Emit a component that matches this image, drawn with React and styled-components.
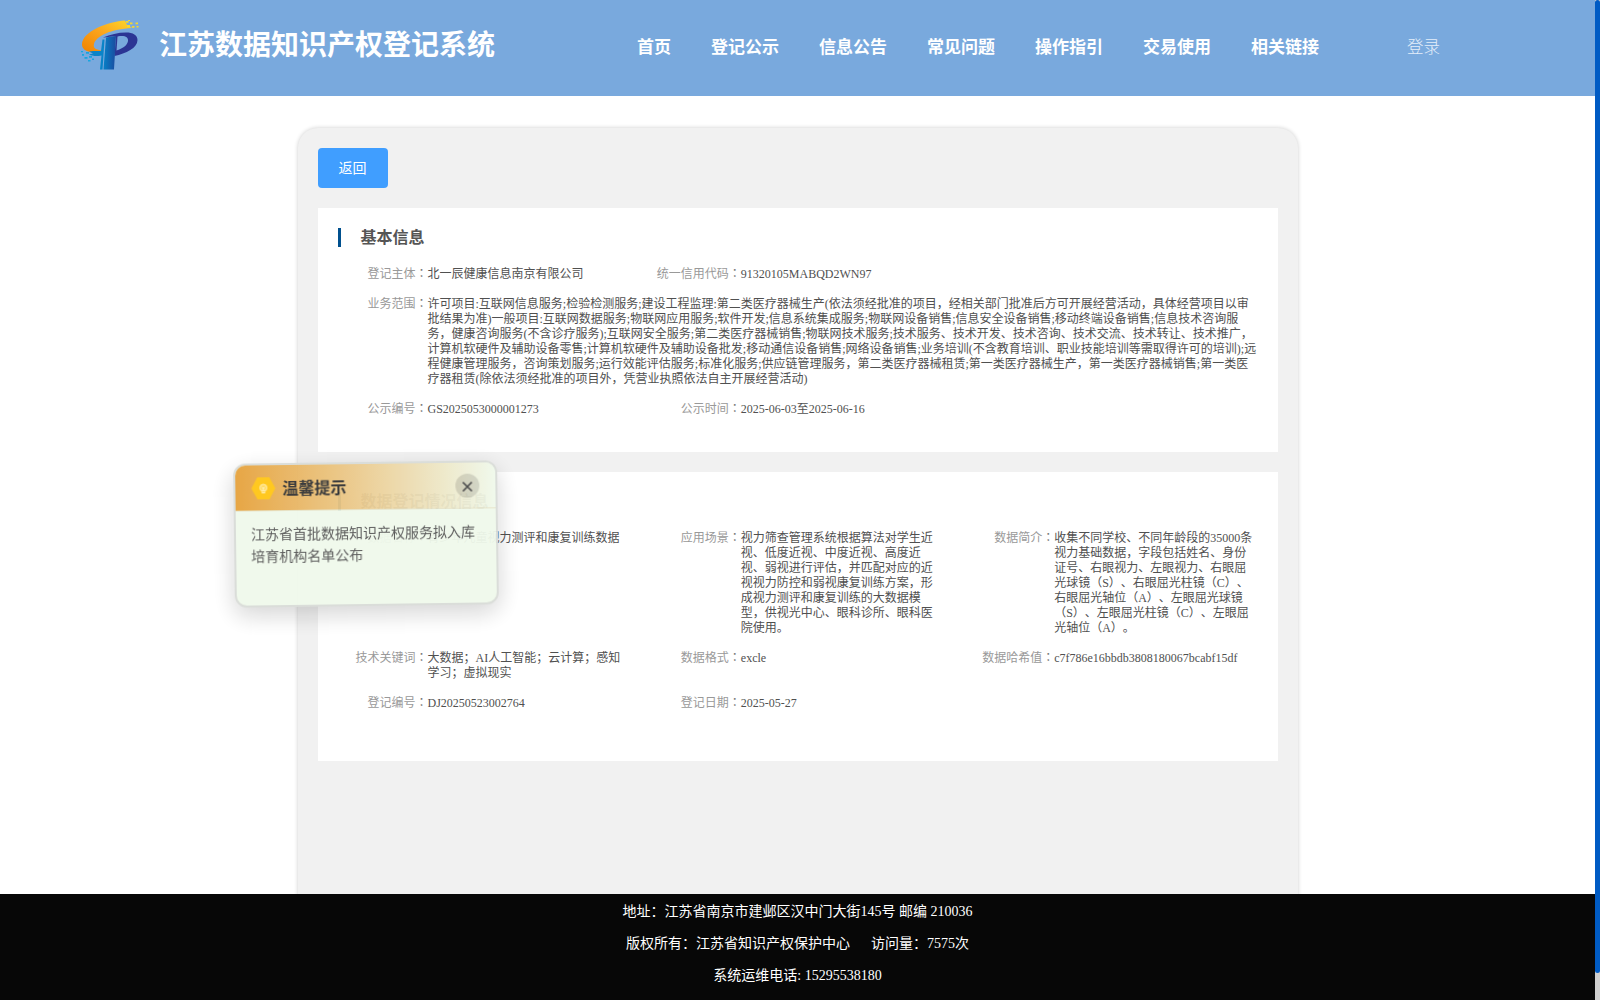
import React, { useState } from 'react'
import styled, { createGlobalStyle } from 'styled-components'

const GlobalStyle = createGlobalStyle`
    * {
        box-sizing: border-box;
    }
    body {
        margin: 0;
        background: #fff;
        overflow: hidden;
        font-family: 'Liberation Serif', 'Noto Sans CJK SC', serif;
        text-spacing-trim: space-all;
    }
`;

const Wrapper = styled.div`
    display: grid;
    grid-template-columns: 1fr 5px;
    height: 1000px;
    overflow: hidden;
`;

const Page = styled.div`
    display: flex;
    flex-direction: column;
    height: 1000px;
    min-width: 0;
`;

const ScrollTrack = styled.div`
    background: #cfcfcf;
`;

const ScrollThumb = styled.div`
    height: 973px;
    border-radius: 3px;
    background: #005bc4;
`;

const Header = styled.header`
    display: flex;
    flex: none;
    height: 96px;
    padding: 0 0 4px 80px;
    align-items: center;
    background: #79a9dd;
    color: #fff;
`;

const SiteTitle = styled.h1`
    width: 478px;
    margin: 0 0 0 19px;
    font-size: 28px;
    line-height: 40px;
    font-weight: 700;
    white-space: nowrap;
`;

const Nav = styled.nav`
    display: flex;
    gap: 40px;
    padding-top: 4px;
`;

const NavLink = styled.a`
    font-size: 17px;
    line-height: 24px;
    font-weight: 600;
    cursor: pointer;
`;

const LoginLink = styled.a`
    margin-left: 88px;
    padding-top: 4px;
    font-size: 16.5px;
    line-height: 24px;
    font-weight: 300;
    color: #e4eefa;
    cursor: pointer;
`;

const Main = styled.main`
    flex: 1;
    min-height: 0;
    padding-top: 32px;
    overflow: hidden;
`;

const Card = styled.div`
    width: 1000px;
    height: 900px;
    margin: 0 auto;
    padding: 20px;
    border-radius: 20px;
    background: #f1f1f1;
    box-shadow: 0 0 4px rgba(0, 0, 0, 0.2);
`;

const BackButton = styled.button`
    display: block;
    width: 70px;
    height: 40px;
    padding: 0 0 2px;
    border: 0;
    border-radius: 4px;
    background: #409eff;
    color: #fff;
    font-family: inherit;
    font-size: 14px;
    cursor: pointer;
`;

const Panel = styled.section`
    height: ${props => props.$height}px;
    margin-top: 20px;
    padding: 20px 0 0 20px;
    background: #fff;
`;

const PanelTitle = styled.h2`
    height: 19px;
    margin: 0 0 20px;
    padding-left: 20px;
    border-left: 3px solid #00508e;
    font-size: 16px;
    line-height: 19px;
    font-weight: 700;
    color: #555;
`;

const Row = styled.div`
    display: grid;
    grid-template-columns: repeat(3, 1fr);
    margin-bottom: 15px;
`;

const Item = styled.div`
    display: flex;
    grid-column: ${props => (props.$wide ? '1 / -1' : 'auto')};
    font-size: 12px;
    line-height: 15px;
`;

const Label = styled.div`
    width: 90px;
    flex: none;
    text-align: right;
    white-space: nowrap;
    color: #999;
`;

const Colon = styled.span`
    font-family: 'Noto Sans CJK TC', sans-serif;
    line-height: 1;
    color: #777;
`;

const Value = styled.div`
    width: ${props => (props.$wide ? 830 : 200)}px;
    color: #505050;
`;

const Footer = styled.footer`
    flex: none;
    height: 106px;
    padding-top: 2px;
    background: #070707;
    color: #fff;
    text-align: center;
`;

const FooterLine = styled.p`
    margin: 0;
    font-size: 14px;
    line-height: 32px;
    white-space: pre;
`;

const Notice = styled.div`
    position: fixed;
    top: 462px;
    left: 234px;
    width: 264px;
    height: 144px;
    border: 2px solid #d9dcd7;
    border-radius: 12px;
    background: #f0f9eb;
    box-shadow: 0 8px 24px rgba(0, 0, 0, 0.18);
    opacity: 0.95;
    overflow: hidden;
    transform: rotate(-0.75deg);
`;

const NoticeHead = styled.div`
    display: flex;
    height: 46px;
    padding: 0 16px;
    align-items: center;
    border-bottom: 1px solid #e6e3c8;
    background: linear-gradient(90deg, #e6a23c, #f0f9eb);
`;

const NoticeTitle = styled.div`
    flex: 1;
    margin: 2px 0 0 7px;
    font-size: 16px;
    line-height: 22px;
    font-weight: 700;
    color: #303133;
`;

const CloseButton = styled.button`
    display: flex;
    width: 24px;
    height: 24px;
    padding: 2px 0 0;
    align-items: center;
    justify-content: center;
    border: 0;
    border-radius: 50%;
    background: rgba(0, 0, 0, 0.13);
    cursor: pointer;
`;

const NoticeBody = styled.div`
    padding: 13px 15px;
    font-size: 14px;
    line-height: 22.4px;
    color: #555;
`;

const menus = ['首页', '登记公示', '信息公告', '常见问题', '操作指引', '交易使用', '相关链接']

const scope = '许可项目:互联网信息服务;检验检测服务;建设工程监理:第二类医疗器械生产(依法须经批准的项目，经相关部门批准后方可开展经营活动，具体经营项目以审批结果为准)一般项目:互联网数据服务;物联网应用服务;软件开发;信息系统集成服务;物联网设备销售;信息安全设备销售;移动终端设备销售;信息技术咨询服务，健康咨询服务(不含诊疗服务);互联网安全服务;第二类医疗器械销售;物联网技术服务;技术服务、技术开发、技术咨询、技术交流、技术转让、技术推广，计算机软硬件及辅助设备零售;计算机软硬件及辅助设备批发;移动通信设备销售;网络设备销售;业务培训(不含教育培训、职业技能培训等需取得许可的培训);远程健康管理服务，咨询策划服务;运行效能评估服务;标准化服务;供应链管理服务，第二类医疗器械租赁;第一类医疗器械生产，第一类医疗器械销售;第一类医疗器租赁(除依法须经批准的项目外，凭营业执照依法自主开展经营活动)'

const basicRows = [
    [
        { label: '登记主体', value: '北一辰健康信息南京有限公司' },
        { label: '统一信用代码', value: '91320105MABQD2WN97' },
    ],
    [{ label: '业务范围', value: scope, wide: true }],
    [
        { label: '公示编号', value: 'GS2025053000001273' },
        { label: '公示时间', value: '2025-06-03至2025-06-16' },
    ],
]

const dataRows = [
    [
        { label: '数据名称', value: '青少年儿童视力测评和康复训练数据' },
        { label: '应用场景', value: '视力筛查管理系统根据算法对学生近视、低度近视、中度近视、高度近视、弱视进行评估，并匹配对应的近视视力防控和弱视康复训练方案，形成视力测评和康复训练的大数据模型，供视光中心、眼科诊所、眼科医院使用。' },
        { label: '数据简介', value: '收集不同学校、不同年龄段的35000条视力基础数据，字段包括姓名、身份证号、右眼视力、左眼视力、右眼屈光球镜（S）、右眼屈光柱镜（C）、右眼屈光轴位（A）、左眼屈光球镜（S）、左眼屈光柱镜（C）、左眼屈光轴位（A）。' },
    ],
    [
        { label: '技术关键词', value: '大数据；AI人工智能；云计算；感知学习；虚拟现实' },
        { label: '数据格式', value: 'excle' },
        { label: '数据哈希值', value: 'c7f786e16bbdb3808180067bcabf15df' },
    ],
    [
        { label: '登记编号', value: 'DJ20250523002764' },
        { label: '登记日期', value: '2025-05-27' },
    ],
]

const Logo = () => (
    <svg width="60" height="54" viewBox="0 0 60 54">
        <defs>
            <linearGradient id="ring" x1="0" y1="1" x2="1" y2="0">
                <stop offset="0" stopColor="#f08200" />
                <stop offset="0.5" stopColor="#fba41c" />
                <stop offset="1" stopColor="#fdd82a" />
            </linearGradient>
            <linearGradient id="stem" x1="0" y1="0" x2="1" y2="0">
                <stop offset="0" stopColor="#0780c6" />
                <stop offset="1" stopColor="#1b4b9f" />
            </linearGradient>
        </defs>
        <path d="M45 1.500C29 2.500 2 12 2 25.500 2 31 8 34.500 19 32.500l2.500-1.500C15 31 13 28.500 14 25 16 17 31 10 52 9l-5-3z" fill="url(#ring)" />
        <path d="M46 2h2.500v1.800H46zM50 3.500h2.500v1.800H50zM47 6h3v2h-3zM52 7h2.500v1.800H52zM48 1h2v1h-2zM55.500 3.500H58v1.700h-2.500zM56.500 7h2v1.600h-2z" fill="#f5d72c" />
        <path d="M23 18.500C30 15.500 38 13.500 46 13.500c7 0 11.500 2.500 11.500 7.500C57.500 29 46 34.500 34.500 37L36 17.500c-4 0-8 .5-13 1z" fill="#2c3594" />
        <path d="M37.500 17.500c7-1.500 11 .5 10.500 4.500-.6 4.500-5.500 7.500-11.500 9.500z" fill="#79a9dd" />
        <path d="M26 18.500l10-1.500-2 33.500H23.500z" fill="url(#stem)" />
        <path d="M22.500 20.500h2l-2 30h-2.500l1.500-14c-5 1-9 .5-12.500-1l4-1-4-2 4-.5h8z" fill="#0984c8" />
        <path d="M6 33h3v1.800H6zM2 35h2v1.700H2zM4.500 38h3v1.700h-3zM9 37h3v1.700H9zM1 32h2v1.300H1zM8 41h2.500v1.500H8zM12 39.500h2V41h-2z" fill="#16a5e0" />
    </svg>
)

const HintIcon = () => (
    <svg width="24" height="24" viewBox="0 0 24 24" fill="none">
        <path d="M6 1h12l6 11-6 11H6L0 12z" fill="#ffc615" />
        <circle cx="12" cy="11.500" r="3.500" fill="#ffd95c" stroke="#fff0b8" strokeWidth="1" />
        <path d="M10.500 15.500v1h3v-1M10.500 11l1.500 1 1.500-1M12 12v3" stroke="#fff3c4" strokeWidth="1" />
    </svg>
)

const CloseIcon = () => (
    <svg width="12" height="12" viewBox="0 0 12 12">
        <path d="M1.500 1.500l9 9M10.500 1.500l-9 9" stroke="#444" strokeWidth="1.700" />
    </svg>
)

const Rows = ({ rows }) => rows.map((items, index) => (
    <Row key={index}>
        {items.map(item => (
            <Item key={item.label} $wide={item.wide}>
                <Label>{item.label}<Colon lang="zh-TW">：</Colon></Label>
                <Value $wide={item.wide}>{item.value}</Value>
            </Item>
        ))}
    </Row>
))

const App = () => {

    const [notice, setNotice] = useState(true)

    return (
        <Wrapper lang="zh-CN">
            <GlobalStyle />
            <Page>
                <Header>
                    <Logo />
                    <SiteTitle>江苏数据知识产权登记系统</SiteTitle>
                    <Nav>
                        {menus.map(menu => <NavLink key={menu}>{menu}</NavLink>)}
                    </Nav>
                    <LoginLink>登录</LoginLink>
                </Header>
                <Main>
                    <Card>
                        <BackButton>返回</BackButton>
                        <Panel $height={244}>
                            <PanelTitle>基本信息</PanelTitle>
                            <Rows rows={basicRows} />
                        </Panel>
                        <Panel $height={289}>
                            <PanelTitle>数据登记情况信息</PanelTitle>
                            <Rows rows={dataRows} />
                        </Panel>
                    </Card>
                </Main>
                <Footer>
                    <FooterLine>地址：江苏省南京市建邺区汉中门大街145号 邮编 210036</FooterLine>
                    <FooterLine>{'版权所有：江苏省知识产权保护中心\u00a0\u00a0\u00a0\u00a0\u00a0\u00a0访问量：7575次'}</FooterLine>
                    <FooterLine>系统运维电话: 15295538180</FooterLine>
                </Footer>
            </Page>
            <ScrollTrack>
                <ScrollThumb />
            </ScrollTrack>
            {notice && (
                <Notice>
                    <NoticeHead>
                        <HintIcon />
                        <NoticeTitle>温馨提示</NoticeTitle>
                        <CloseButton aria-label="关闭" onClick={() => setNotice(false)}>
                            <CloseIcon />
                        </CloseButton>
                    </NoticeHead>
                    <NoticeBody>江苏省首批数据知识产权服务拟入库培育机构名单公布</NoticeBody>
                </Notice>
            )}
        </Wrapper>
    );
}

export default App
